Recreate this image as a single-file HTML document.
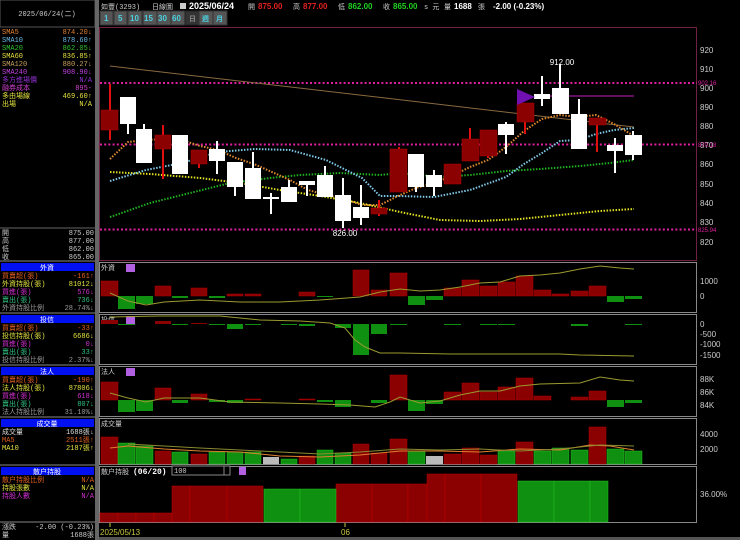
<!DOCTYPE html>
<html><head><meta charset="utf-8"><style>
html,body{margin:0;padding:0;background:#000;}
svg{display:block;font-family:"Liberation Sans","Noto Sans CJK TC",sans-serif;}
.s{font-size:7px;font-family:"Liberation Mono","Noto Sans CJK TC",monospace;}
</style></head><body>
<svg width="740" height="540" viewBox="0 0 740 540" xmlns="http://www.w3.org/2000/svg">
<rect width="740" height="540" fill="#000"/>
<!-- left panel -->
<rect x="0" y="0" width="95" height="27" fill="#000" stroke="#555" stroke-width="1"/>
<text x="47" y="16" class="s" fill="#ccc" text-anchor="middle">2025/06/24(二)</text>
<rect x="95" y="0" width="4" height="540" fill="#666"/>
<g class="s">
<text x="2" y="34" fill="#e08030">SMA5</text><text x="92" y="34" fill="#e08030" text-anchor="end">874.20↓</text>
<text x="2" y="42" fill="#6ab8e0">SMA10</text><text x="92" y="42" fill="#6ab8e0" text-anchor="end">878.60↑</text>
<text x="2" y="50" fill="#30c030">SMA20</text><text x="92" y="50" fill="#30c030" text-anchor="end">862.05↓</text>
<text x="2" y="58" fill="#e0e040">SMA60</text><text x="92" y="58" fill="#e0e040" text-anchor="end">836.85↑</text>
<text x="2" y="66" fill="#c8a060">SMA120</text><text x="92" y="66" fill="#c8a060" text-anchor="end">880.27↓</text>
<text x="2" y="74" fill="#c040e0">SMA240</text><text x="92" y="74" fill="#c040e0" text-anchor="end">908.90↓</text>
<text x="2" y="82" fill="#9030d0">多方進場價</text><text x="92" y="82" fill="#9030d0" text-anchor="end">N/A</text>
<text x="2" y="90" fill="#d040d0">融券成本</text><text x="92" y="90" fill="#d040d0" text-anchor="end">895-</text>
<text x="2" y="98" fill="#e0e040">多由場線</text><text x="92" y="98" fill="#e0e040" text-anchor="end">469.60↑</text>
<text x="2" y="106" fill="#e0e040">出場</text><text x="92" y="106" fill="#e0e040" text-anchor="end">N/A</text>
</g>
<line x1="0" y1="228" x2="95" y2="228" stroke="#666"/>
<g class="s" fill="#ccc">
<text x="2" y="235">開</text><text x="94" y="235" text-anchor="end">875.00</text>
<text x="2" y="243">高</text><text x="94" y="243" text-anchor="end">877.00</text>
<text x="2" y="251">低</text><text x="94" y="251" text-anchor="end">862.00</text>
<text x="2" y="259">收</text><text x="94" y="259" text-anchor="end">865.00</text>
</g>
<line x1="0" y1="261" x2="95" y2="261" stroke="#888"/>
<rect x="1" y="263" width="93" height="8" fill="#0010f0"/>
<text x="47" y="270" class="s" fill="#fff" text-anchor="middle">外資</text>
<g class="s">
<text x="2" y="278" fill="#e06020">買賣超(張)</text><text x="94" y="278" fill="#e06020" text-anchor="end">-161↑</text>
<text x="2" y="286" fill="#e0e040">外資持股(張)</text><text x="94" y="286" fill="#e0e040" text-anchor="end">81012↓</text>
<text x="2" y="294" fill="#d030d0">買進(張)</text><text x="94" y="294" fill="#d030d0" text-anchor="end">576↓</text>
<text x="2" y="302" fill="#30c080">賣出(張)</text><text x="94" y="302" fill="#30c080" text-anchor="end">736↓</text>
<text x="2" y="310" fill="#999">外資持股比例</text><text x="94" y="310" fill="#999" text-anchor="end">28.74%↓</text>
</g>
<line x1="0" y1="313" x2="95" y2="313" stroke="#888"/>
<rect x="1" y="315" width="93" height="8" fill="#0010f0"/>
<text x="47" y="322" class="s" fill="#fff" text-anchor="middle">投信</text>
<g class="s">
<text x="2" y="330" fill="#e06020">買賣超(張)</text><text x="94" y="330" fill="#e06020" text-anchor="end">-33↑</text>
<text x="2" y="338" fill="#e0e040">投信持股(張)</text><text x="94" y="338" fill="#e0e040" text-anchor="end">6686↓</text>
<text x="2" y="346" fill="#d030d0">買進(張)</text><text x="94" y="346" fill="#d030d0" text-anchor="end">0↓</text>
<text x="2" y="354" fill="#30c080">賣出(張)</text><text x="94" y="354" fill="#30c080" text-anchor="end">33↑</text>
<text x="2" y="362" fill="#999">投信持股比例</text><text x="94" y="362" fill="#999" text-anchor="end">2.37%↓</text>
</g>
<line x1="0" y1="365" x2="95" y2="365" stroke="#888"/>
<rect x="1" y="367" width="93" height="8" fill="#0010f0"/>
<text x="47" y="374" class="s" fill="#fff" text-anchor="middle">法人</text>
<g class="s">
<text x="2" y="382" fill="#e06020">買賣超(張)</text><text x="94" y="382" fill="#e06020" text-anchor="end">-190↑</text>
<text x="2" y="390" fill="#e0e040">法人持股(張)</text><text x="94" y="390" fill="#e0e040" text-anchor="end">87806↓</text>
<text x="2" y="398" fill="#d030d0">買進(張)</text><text x="94" y="398" fill="#d030d0" text-anchor="end">618↓</text>
<text x="2" y="406" fill="#30c080">賣出(張)</text><text x="94" y="406" fill="#30c080" text-anchor="end">807↓</text>
<text x="2" y="414" fill="#999">法人持股比例</text><text x="94" y="414" fill="#999" text-anchor="end">31.10%↓</text>
</g>
<line x1="0" y1="417" x2="95" y2="417" stroke="#888"/>
<rect x="1" y="419" width="93" height="8" fill="#0010f0"/>
<text x="47" y="426" class="s" fill="#fff" text-anchor="middle">成交量</text>
<g class="s">
<text x="2" y="434" fill="#ddd">成交量</text><text x="94" y="434" fill="#ddd" text-anchor="end">1688張↓</text>
<text x="2" y="442" fill="#e06020">MA5</text><text x="94" y="442" fill="#e06020" text-anchor="end">2511張↑</text>
<text x="2" y="450" fill="#e0e040">MA10</text><text x="94" y="450" fill="#e0e040" text-anchor="end">2187張↑</text>
</g>
<line x1="0" y1="465" x2="95" y2="465" stroke="#888"/>
<rect x="1" y="467" width="93" height="8" fill="#0010f0"/>
<text x="47" y="474" class="s" fill="#fff" text-anchor="middle">散户持股</text>
<g class="s">
<text x="2" y="482" fill="#e06020">散户持股比例</text><text x="94" y="482" fill="#e06020" text-anchor="end">N/A</text>
<text x="2" y="490" fill="#e0e040">持股張數</text><text x="94" y="490" fill="#e0e040" text-anchor="end">N/A</text>
<text x="2" y="498" fill="#d030d0">持股人數</text><text x="94" y="498" fill="#d030d0" text-anchor="end">N/A</text>
</g>
<line x1="0" y1="522" x2="95" y2="522" stroke="#888"/>
<g class="s" fill="#ccc">
<text x="2" y="529">漲跌</text><text x="94" y="529" text-anchor="end">-2.00 (-0.23%)</text>
<text x="2" y="537">量</text><text x="94" y="537" text-anchor="end">1688張</text>
</g>

<!-- top header -->
<g font-size="8">
<text x="101" y="9" class="s" fill="#ccc">如豐(3293)</text>
<text x="152" y="9" class="s" fill="#ccc">日線圖</text>
<rect x="180" y="3" width="6" height="6" fill="#ccc"/>
<text x="189" y="9" font-size="9" font-weight="bold" fill="#fff">2025/06/24</text>
<text x="248" y="9" class="s" fill="#ccc">開</text><text x="258" y="9" font-weight="bold" fill="#e02020">875.00</text>
<text x="293" y="9" class="s" fill="#ccc">高</text><text x="303" y="9" font-weight="bold" fill="#e02020">877.00</text>
<text x="338" y="9" class="s" fill="#ccc">低</text><text x="348" y="9" font-weight="bold" fill="#20d020">862.00</text>
<text x="383" y="9" class="s" fill="#ccc">收</text><text x="393" y="9" font-weight="bold" fill="#20d020">865.00</text>
<text x="424" y="9" class="s" fill="#ccc">s 元</text>
<text x="444" y="9" class="s" fill="#ccc">量</text><text x="454" y="9" font-weight="bold" fill="#fff">1688</text>
<text x="478" y="9" class="s" fill="#ccc">張</text>
<text x="493" y="9" font-weight="bold" fill="#fff">-2.00 (-0.23%)</text>
</g>
<g font-size="8" font-weight="bold" fill="#4cd0e0">
<rect x="100" y="11" width="127" height="14" fill="#444"/>
<rect x="100" y="11" width="13" height="14" fill="#555" stroke="#333"/><text x="104" y="21">1</text>
<rect x="114" y="11" width="13" height="14" fill="#555" stroke="#333"/><text x="118" y="21">5</text>
<rect x="128" y="11" width="14" height="14" fill="#555" stroke="#333"/><text x="130" y="21">10</text>
<rect x="143" y="11" width="14" height="14" fill="#555" stroke="#333"/><text x="144" y="21">15</text>
<rect x="157" y="11" width="14" height="14" fill="#555" stroke="#333"/><text x="158" y="21">30</text>
<rect x="171" y="11" width="14" height="14" fill="#555" stroke="#333"/><text x="172" y="21">60</text>
<rect x="185" y="11" width="14" height="14" fill="#333" stroke="#222"/><text x="189" y="21" class="s" fill="#888">日</text>
<rect x="199" y="11" width="14" height="14" fill="#555" stroke="#333"/><text x="202" y="21" class="s" fill="#4cd0e0">週</text>
<rect x="213" y="11" width="14" height="14" fill="#555" stroke="#333"/><text x="216" y="21" class="s" fill="#4cd0e0">月</text>
</g>

<!-- main chart frame -->
<rect x="99.5" y="27.5" width="597" height="233" fill="none" stroke="#702040"/>
<g font-size="8" fill="#ccc">
<text x="700" y="53">920</text><text x="700" y="72">910</text><text x="700" y="91">900</text><text x="700" y="110">890</text>
<text x="700" y="129">880</text><text x="700" y="148">870</text><text x="700" y="167">860</text><text x="700" y="187">850</text>
<text x="700" y="206">840</text><text x="700" y="225">830</text><text x="700" y="245">820</text>
</g>
<g stroke="#e020a0" stroke-width="2" stroke-dasharray="2 2.2">
<line x1="100" y1="83" x2="697" y2="83"/><line x1="100" y1="144.5" x2="697" y2="144.5"/><line x1="100" y1="229.5" x2="697" y2="229.5"/>
</g>
<g font-size="6" fill="#e020a0">
<text x="698" y="85">902.16</text><text x="698" y="147">870.18</text><text x="698" y="232">825.94</text>
</g>
<line x1="110" y1="66" x2="634" y2="127" stroke="#8a6a40" stroke-width="1"/>
<!-- MAs -->
<g fill="none" stroke-width="2" stroke-dasharray="1.5 1.5">
<polyline stroke="#e0e020" points="110,172 150,174 200,178 240,183 280,190 320,196 360,203 400,212 440,220 480,221 520,219 560,215 600,211 634,209"/>
<polyline stroke="#20b020" points="110,217 150,203 190,193 230,183 270,178 300,175 340,173 380,175 400,173 440,177 470,175 506,171 540,169 580,166 610,163 634,160"/>
<polyline stroke="#80c8e8" points="110,181 146,170 182,163 218,152 254,149 290,150 326,160 362,178 380,196 398,196 434,197 470,190 506,177 524,164 542,153 560,141 578,140 596,134 614,130 634,128"/>
<polyline stroke="#e08a30" points="110,159 128,142 146,140 164,139 182,140 200,146 218,150 236,158 254,164 272,172 290,180 308,190 326,195 344,199 362,205 380,205 398,196 416,188 434,183 452,176 470,167 488,160 506,147 524,131 542,119 560,115 578,117 596,115 614,124 634,136"/>
</g>
<line x1="536" y1="96" x2="634" y2="96" stroke="#c020c0" stroke-width="1"/>
<!-- candles: white -->
<g stroke="#fff" stroke-width="2">
<line x1="128" y1="97" x2="128" y2="134"/><line x1="144" y1="124" x2="144" y2="163"/><line x1="180" y1="135" x2="180" y2="174"/>
<line x1="217" y1="141" x2="217" y2="174"/><line x1="235" y1="162" x2="235" y2="196"/><line x1="253" y1="152" x2="253" y2="199"/>
<line x1="271" y1="193" x2="271" y2="214"/><line x1="289" y1="180" x2="289" y2="202"/><line x1="307" y1="181" x2="307" y2="196"/>
<line x1="325" y1="166" x2="325" y2="197"/><line x1="343" y1="178" x2="343" y2="228"/><line x1="361" y1="185" x2="361" y2="225"/>
<line x1="416" y1="154" x2="416" y2="192"/><line x1="434" y1="170" x2="434" y2="196"/><line x1="506" y1="122" x2="506" y2="154"/>
<line x1="542" y1="76" x2="542" y2="106"/><line x1="560" y1="64" x2="560" y2="114"/><line x1="579" y1="99" x2="579" y2="149"/>
<line x1="615" y1="138" x2="615" y2="173"/><line x1="633" y1="131" x2="633" y2="160"/>
</g>
<g fill="#fff">
<rect x="120" y="97" width="16" height="27"/><rect x="136" y="129" width="16" height="34"/><rect x="172" y="135" width="16" height="39"/>
<rect x="209" y="149" width="16" height="12"/><rect x="227" y="162" width="16" height="25"/><rect x="245" y="168" width="16" height="31"/>
<rect x="263" y="197" width="16" height="2"/><rect x="281" y="187" width="16" height="15"/><rect x="299" y="181" width="16" height="4"/>
<rect x="317" y="175" width="16" height="22"/><rect x="335" y="195" width="16" height="26"/><rect x="353" y="207" width="16" height="11"/>
<rect x="408" y="154" width="16" height="33"/><rect x="426" y="175" width="16" height="12"/><rect x="498" y="124" width="16" height="11"/>
<rect x="534" y="94" width="16" height="5"/><rect x="552" y="88" width="17" height="26"/><rect x="571" y="114" width="16" height="35"/>
<rect x="607" y="145" width="16" height="6"/><rect x="625" y="135" width="17" height="20"/>
</g>
<!-- red candles -->
<g stroke="#e01010" stroke-width="2">
<line x1="110" y1="84" x2="110" y2="140"/><line x1="163" y1="125" x2="163" y2="179"/><line x1="199" y1="150" x2="199" y2="168"/>
<line x1="379" y1="200" x2="379" y2="216"/><line x1="470" y1="128" x2="470" y2="161"/><line x1="488" y1="130" x2="488" y2="158"/>
<line x1="525" y1="103" x2="525" y2="134"/><line x1="597" y1="118" x2="597" y2="152"/><line x1="399" y1="147" x2="399" y2="192"/>
</g>
<g fill="#8b0000" stroke="#b00000" stroke-width="0.5">
<rect x="101" y="110" width="17" height="20"/><rect x="155" y="135" width="16" height="14"/><rect x="191" y="150" width="16" height="14"/>
<rect x="371" y="208" width="16" height="6"/><rect x="390" y="149" width="17" height="43"/><rect x="444" y="164" width="17" height="20"/>
<rect x="462" y="139" width="17" height="22"/><rect x="480" y="130" width="17" height="26"/><rect x="517" y="103" width="17" height="19"/>
<rect x="589" y="118" width="17" height="7"/>
</g>
<polygon points="517,89 517,105 535,97" fill="#7010b0"/>
<text x="562" y="65" font-size="8" fill="#fff" text-anchor="middle">912.00</text>
<text x="345" y="236" font-size="8" fill="#fff" text-anchor="middle">826.00</text>

<!-- sub panels frames -->
<g fill="none" stroke="#888">
<rect x="99.5" y="262.5" width="597" height="50"/>
<rect x="99.5" y="314.5" width="597" height="50"/>
<rect x="99.5" y="366.5" width="597" height="50"/>
<rect x="99.5" y="418.5" width="597" height="46"/>
<rect x="99.5" y="466.5" width="597" height="56"/>
</g>
<g class="s" fill="#ccc">
<text x="101" y="270">外資</text><text x="101" y="322">投信</text><text x="101" y="374">法人</text><text x="101" y="426">成交量</text>
<text x="101" y="474">散户持股</text><text x="133" y="474" font-size="8" font-weight="bold" fill="#fff">(06/20)</text>
</g>
<rect x="126" y="264" width="9" height="8" fill="#b060e0"/><rect x="126" y="316" width="9" height="8" fill="#b060e0"/><rect x="126" y="368" width="9" height="8" fill="#b060e0"/><rect x="239" y="467" width="7" height="8" fill="#b060e0"/>
<rect x="172" y="466" width="52" height="9" fill="#000" stroke="#888"/><text x="174" y="473" class="s" fill="#ccc">100</text>
<rect x="224" y="466" width="6" height="9" fill="#000" stroke="#888"/>
<g font-size="8" fill="#ccc">
<text x="700" y="284">1000</text><text x="700" y="299">0</text>
<text x="700" y="327">0</text><text x="700" y="337">-500</text><text x="700" y="347">-1000</text><text x="700" y="358">-1500</text>
<text x="700" y="382">88K</text><text x="700" y="395">86K</text><text x="700" y="408">84K</text>
<text x="700" y="437">4000</text><text x="700" y="452">2000</text>
<text x="700" y="497">36.00%</text>
</g>
<!-- 外資 bars zero 296 -->
<g fill="#8b0000" stroke="#b00000" stroke-width="0.5">
<rect x="101" y="281" width="17" height="15"/><rect x="155" y="286" width="16" height="10"/><rect x="191" y="288" width="16" height="8"/>
<rect x="227" y="294" width="16" height="2"/><rect x="245" y="294" width="16" height="2"/><rect x="299" y="292" width="16" height="4"/>
<rect x="353" y="270" width="16" height="26"/><rect x="371" y="290" width="16" height="6"/><rect x="390" y="273" width="17" height="23"/>
<rect x="444" y="288" width="17" height="8"/><rect x="462" y="280" width="17" height="16"/><rect x="480" y="286" width="17" height="10"/>
<rect x="498" y="282" width="17" height="14"/><rect x="516" y="276" width="17" height="20"/><rect x="534" y="290" width="17" height="6"/>
<rect x="552" y="294" width="17" height="2"/><rect x="571" y="291" width="17" height="5"/><rect x="589" y="286" width="17" height="10"/>
</g>
<g fill="#109010">
<rect x="118" y="296" width="17" height="13"/><rect x="136" y="296" width="17" height="8"/><rect x="172" y="296" width="16" height="2"/>
<rect x="209" y="296" width="16" height="2"/><rect x="317" y="296" width="16" height="1"/><rect x="408" y="296" width="17" height="9"/>
<rect x="426" y="296" width="17" height="4"/><rect x="607" y="296" width="17" height="6"/><rect x="625" y="296" width="17" height="3"/>
</g>
<polyline fill="none" stroke="#9a9a30" points="110,293 128,301 146,305 164,302 200,300 240,302 280,302 320,300 360,297 380,292 400,289 420,291 440,290 460,287 480,283 500,282 520,276 540,275 560,273 580,269 600,266 620,268 634,269"/>
<!-- 投信 zero 324 -->
<g fill="#8b0000"><rect x="101" y="320" width="17" height="4"/><rect x="155" y="321" width="16" height="3"/><rect x="191" y="323" width="16" height="1"/></g>
<g fill="#109010">
<rect x="118" y="324" width="17" height="1"/><rect x="172" y="324" width="16" height="1"/><rect x="209" y="324" width="16" height="1"/>
<rect x="227" y="324" width="16" height="5"/><rect x="245" y="324" width="16" height="1"/><rect x="281" y="324" width="16" height="1"/>
<rect x="299" y="324" width="16" height="2"/><rect x="335" y="324" width="16" height="4"/><rect x="353" y="324" width="16" height="31"/>
<rect x="371" y="324" width="16" height="10"/><rect x="390" y="324" width="17" height="1"/><rect x="444" y="324" width="17" height="1"/>
<rect x="480" y="324" width="17" height="1"/><rect x="498" y="324" width="17" height="1"/><rect x="571" y="324" width="17" height="2"/>
<rect x="625" y="324" width="17" height="1"/>
</g>
<polyline fill="none" stroke="#9a9a30" points="110,317 160,316 220,316 240,318 260,320 300,321 330,323 345,328 355,340 365,347 380,353 400,353 450,354 510,354 560,354 580,355 634,356"/>
<!-- 法人 zero 400 -->
<g fill="#8b0000" stroke="#b00000" stroke-width="0.5">
<rect x="101" y="382" width="17" height="18"/><rect x="155" y="388" width="16" height="12"/><rect x="191" y="394" width="16" height="6"/>
<rect x="245" y="399" width="16" height="1"/><rect x="299" y="399" width="16" height="1"/><rect x="390" y="375" width="17" height="25"/>
<rect x="444" y="392" width="17" height="8"/><rect x="462" y="383" width="17" height="17"/><rect x="480" y="392" width="17" height="8"/>
<rect x="498" y="387" width="17" height="13"/><rect x="516" y="378" width="17" height="22"/><rect x="534" y="396" width="17" height="4"/>
<rect x="571" y="397" width="17" height="3"/><rect x="589" y="391" width="17" height="9"/>
</g>
<g fill="#109010">
<rect x="118" y="400" width="17" height="12"/><rect x="136" y="400" width="17" height="11"/><rect x="172" y="400" width="16" height="3"/>
<rect x="209" y="400" width="16" height="2"/><rect x="227" y="400" width="16" height="3"/><rect x="317" y="400" width="16" height="2"/>
<rect x="335" y="400" width="16" height="7"/><rect x="371" y="400" width="16" height="3"/><rect x="408" y="400" width="17" height="11"/>
<rect x="426" y="400" width="17" height="4"/><rect x="607" y="400" width="17" height="7"/><rect x="625" y="400" width="17" height="3"/>
</g>
<polyline fill="none" stroke="#9a9a30" points="110,393 128,398 146,402 164,398 200,398 230,402 280,403 320,404 350,405 375,407 390,402 400,397 420,403 440,401 460,395 480,391 500,391 520,386 540,384 580,383 600,377 620,380 634,381"/>
<!-- volume base 464 -->
<g fill="#8b0000" stroke="#b00000" stroke-width="0.5">
<rect x="101" y="437" width="17" height="27"/><rect x="155" y="451" width="16" height="13"/><rect x="191" y="454" width="16" height="10"/>
<rect x="299" y="456" width="16" height="8"/><rect x="353" y="444" width="16" height="20"/><rect x="371" y="453" width="16" height="11"/>
<rect x="390" y="439" width="17" height="25"/><rect x="444" y="454" width="17" height="10"/><rect x="462" y="448" width="17" height="16"/>
<rect x="480" y="455" width="17" height="9"/><rect x="516" y="442" width="17" height="22"/><rect x="589" y="427" width="17" height="37"/>
</g>
<g fill="#109010" stroke="#20c020" stroke-width="0.5">
<rect x="118" y="443" width="17" height="21"/><rect x="136" y="446" width="17" height="18"/><rect x="172" y="452" width="16" height="12"/>
<rect x="209" y="452" width="16" height="12"/><rect x="227" y="452" width="16" height="12"/><rect x="245" y="452" width="16" height="12"/>
<rect x="281" y="459" width="16" height="5"/><rect x="317" y="450" width="16" height="14"/><rect x="335" y="453" width="16" height="11"/>
<rect x="408" y="451" width="17" height="13"/><rect x="498" y="451" width="17" height="13"/><rect x="534" y="451" width="17" height="13"/>
<rect x="552" y="448" width="17" height="16"/><rect x="571" y="450" width="17" height="14"/><rect x="607" y="449" width="17" height="15"/>
<rect x="625" y="451" width="17" height="13"/>
</g>
<g fill="#bbb"><rect x="263" y="457" width="16" height="7"/><rect x="426" y="456" width="17" height="8"/></g>
<polyline fill="none" stroke="#e08030" points="110,448 128,446 164,449 200,451 240,452 280,456 320,457 360,455 400,451 440,451 480,452 520,449 560,450 590,445 610,446 634,450"/>
<polyline fill="none" stroke="#8a8a30" points="128,444 164,446 200,448 240,450 280,452 320,454 360,452 400,449 440,450 480,449 520,451 560,449 600,445 634,446"/>
<!-- dispersion base 522 -->
<g fill="#8b0000" stroke="#c00000" stroke-width="0.5">
<rect x="100" y="513" width="18" height="9"/><rect x="118" y="513" width="18" height="9"/><rect x="136" y="513" width="18" height="9"/><rect x="154" y="513" width="18" height="9"/>
<rect x="172" y="486" width="18" height="36"/><rect x="190" y="486" width="37" height="36"/><rect x="227" y="486" width="36" height="36"/>
<rect x="336" y="484" width="36" height="38"/><rect x="372" y="484" width="36" height="38"/><rect x="408" y="484" width="19" height="38"/>
<rect x="427" y="474" width="18" height="48"/><rect x="445" y="474" width="36" height="48"/><rect x="481" y="474" width="36" height="48"/>
</g>
<g fill="#109010" stroke="#20c020" stroke-width="0.5">
<rect x="264" y="489" width="36" height="33"/><rect x="300" y="489" width="36" height="33"/>
<rect x="518" y="481" width="36" height="41"/><rect x="554" y="481" width="36" height="41"/><rect x="590" y="481" width="18" height="41"/>
</g>
<line x1="110" y1="523" x2="110" y2="527" stroke="#c8c840"/><line x1="345" y1="523" x2="345" y2="527" stroke="#c8c840"/>
<text x="100" y="535" font-size="8" fill="#c8c840">2025/05/13</text>
<text x="341" y="535" font-size="8" fill="#c8c840">06</text>
<rect x="99" y="537" width="641" height="3" fill="#555"/>
</svg>
</body></html>
